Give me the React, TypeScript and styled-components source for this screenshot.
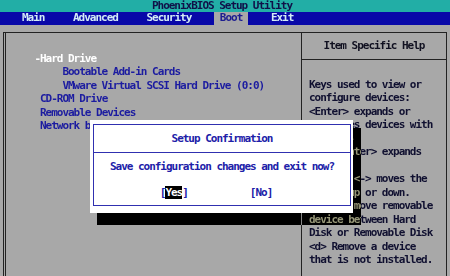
import React from "react";
import styled, { createGlobalStyle } from "styled-components";

const CH = 5.6;
const LINE = 13.5;

const GlobalStyle = createGlobalStyle`
  html, body {
    margin: 0;
    padding: 0;
    background: #a8a8a8;
  }
`;

const Screen = styled.div`
  position: relative;
  width: 450px;
  height: 276px;
  overflow: hidden;
  display: flex;
  flex-direction: column;
  background: #a8a8a8;
  font-family: "DejaVu Sans Mono", "Liberation Mono", monospace;
  font-size: 11px;
  font-weight: bold;
  letter-spacing: -1.02px;
  line-height: ${LINE}px;
`;

const TitleBar = styled.div`
  height: 12px;
  flex: none;
  background: #22aea6;
  color: #101048;
  display: flex;
  align-items: center;
  justify-content: center;
  padding-right: 6px;
  line-height: 12px;
`;

const MenuBar = styled.div`
  height: 12.5px;
  flex: none;
  background: #0808a8;
  display: flex;
  gap: 16.6px;
  padding-left: 16px;
`;

const MenuItem = styled.div<{ $active?: boolean }>`
  padding: 0 6px;
  line-height: 12.5px;
  color: ${(p) => (p.$active ? "#1c1c90" : "#d4ecf6")};
  background: ${(p) => (p.$active ? "#a8a8a8" : "transparent")};
`;

const Body = styled.div`
  flex: 1;
  padding: 7px 3px 0 3px;
`;

const Frame = styled.div`
  height: 270px;
  display: grid;
  grid-template-columns: 296px 1fr;
  border: 1px solid #222;
  border-left: 3px double #222;
`;

const LeftPane = styled.div`
  border-right: 1px solid #222;
  padding: 19px 0 0 34px;
`;

const Entry = styled.div<{ $level?: number; $selected?: boolean }>`
  padding-left: ${(p) => (p.$level || 0) * 4 * CH}px;
  color: ${(p) => (p.$selected ? "#ffffff" : "#1c1ca0")};
  white-space: nowrap;
`;

const Dash = styled.span`
  display: inline-block;
  width: ${CH}px;
  margin-left: -${CH}px;
`;

const RightPane = styled.div`
  display: grid;
  grid-template-rows: 27px 1fr;
`;

const HelpHeader = styled.div`
  border-bottom: 1px solid #222;
  display: flex;
  align-items: center;
  justify-content: center;
  color: #101020;
`;

const HelpText = styled.div`
  padding: 18px 0 0 7px;
  color: #101030;
  white-space: pre;
`;

const Shadow = styled.div`
  position: absolute;
  left: 97px;
  top: 128px;
  width: 264px;
  height: 97px;
  background: #a8a8a8;
  mix-blend-mode: difference;
  z-index: 1;
`;

const Dialog = styled.div`
  position: absolute;
  left: 90px;
  top: 120px;
  width: 263px;
  height: 93px;
  box-sizing: border-box;
  background: #ffffff;
  padding: 4px 2px 7px 3px;
  z-index: 2;
`;

const DialogInner = styled.div`
  height: 100%;
  box-sizing: border-box;
  border: 1px solid #3030b0;
  display: flex;
  flex-direction: column;
  color: #2020a8;
`;

const DialogTitle = styled.div`
  height: 27px;
  flex: none;
  border-bottom: 1px solid #3030b0;
  display: flex;
  align-items: center;
  justify-content: center;
`;

const DialogBody = styled.div`
  flex: 1;
  display: flex;
  flex-direction: column;
  align-items: center;
  gap: 12.5px;
  padding-top: 6.5px;
`;

const Buttons = styled.div`
  display: flex;
  gap: 62px;
  padding-right: 12px;
`;

const Label = styled.span<{ $focused?: boolean }>`
  color: ${(p) => (p.$focused ? "#ffffff" : "inherit")};
  background: ${(p) => (p.$focused ? "#000000" : "transparent")};
`;

const menu = ["Main", "Advanced", "Security", "Boot", "Exit"];

const help = [
  "Keys used to view or",
  "configure devices:",
  "<Enter> expands or",
  "collapses devices with",
  "a + or -",
  "<Ctrl+Enter> expands",
  "all",
  "<+> and <-> moves the",
  "device up or down.",
  "<n> May move removable",
  "device between Hard",
  "Disk or Removable Disk",
  "<d> Remove a device",
  "that is not installed.",
].join("\n");

export default function App() {
  return (
    <Screen>
      <GlobalStyle />
      <TitleBar>PhoenixBIOS Setup Utility</TitleBar>
      <MenuBar>
        {menu.map((m) => (
          <MenuItem key={m} $active={m === "Boot"}>
            {m}
          </MenuItem>
        ))}
      </MenuBar>
      <Body>
        <Frame>
          <LeftPane>
            <Entry $selected>
              <Dash>-</Dash>Hard Drive
            </Entry>
            <Entry $level={1}>Bootable Add-in Cards</Entry>
            <Entry $level={1}>VMware Virtual SCSI Hard Drive (0:0)</Entry>
            <Entry>CD-ROM Drive</Entry>
            <Entry>Removable Devices</Entry>
            <Entry>Network boot from AMD Am79C970A</Entry>
          </LeftPane>
          <RightPane>
            <HelpHeader>Item Specific Help</HelpHeader>
            <HelpText>{help}</HelpText>
          </RightPane>
        </Frame>
      </Body>
      <Shadow />
      <Dialog>
        <DialogInner>
          <DialogTitle>Setup Confirmation</DialogTitle>
          <DialogBody>
            <div>Save configuration changes and exit now?</div>
            <Buttons>
              <span>
                [<Label $focused>Yes</Label>]
              </span>
              <span>
                [<Label>No</Label>]
              </span>
            </Buttons>
          </DialogBody>
        </DialogInner>
      </Dialog>
    </Screen>
  );
}
